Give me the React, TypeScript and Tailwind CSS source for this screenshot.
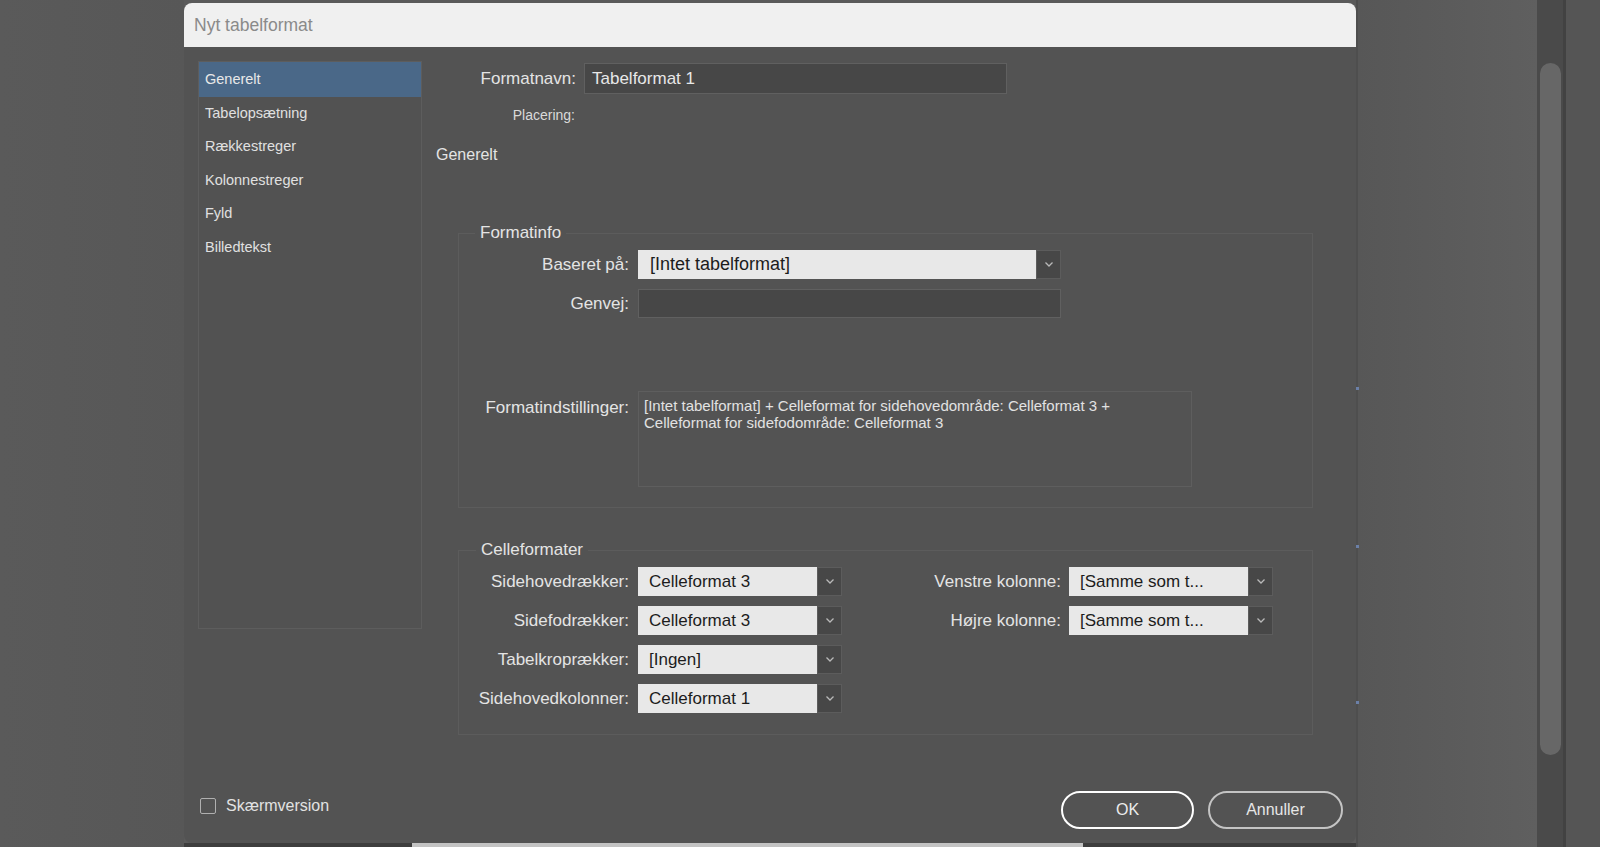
import clsx from 'clsx';

const NAV_ITEMS = ['Generelt', 'Tabelopsætning', 'Rækkestreger', 'Kolonnestreger', 'Fyld', 'Billedtekst'];

const Chevron = () => (
  <svg width="10" height="7" viewBox="0 0 10 7" fill="none">
    <path d="M1.5 1.5 L5 5 L8.5 1.5" stroke="#b9b9b9" strokeWidth="1.3" />
  </svg>
);

function Dropdown({ value, wide }: { value: string; wide?: boolean }) {
  return (
    <div className={clsx('flex h-[29px] shrink-0', wide ? 'w-[423px]' : 'w-[204px]')}>
      <div
        className={clsx(
          'flex flex-1 items-center whitespace-nowrap bg-[#e8e8e8] text-[#1c1c1c]',
          wide ? 'pl-[12px] text-[18px]' : 'pl-[11px] text-[17px]'
        )}
      >
        {value}
      </div>
      <div className="flex w-[25px] items-center justify-center border border-[#5c5c5c] bg-[#474747]">
        <Chevron />
      </div>
    </div>
  );
}

function CellRow({ label, value }: { label: string; value: string }) {
  return (
    <div className="flex h-[29px] items-center">
      <span className="w-[170px] text-right">{label}</span>
      <div className="ml-[9px]">
        <Dropdown value={value} />
      </div>
    </div>
  );
}

export default function App() {
  return (
    <div className="flex h-[847px] w-[1600px] overflow-hidden bg-[#5a5a5a] font-['Liberation_Sans',Arial,sans-serif] text-[#e4e4e4]">
      {/* background left of dialog */}
      <div className="w-[184px] shrink-0 bg-gradient-to-r from-[#5a5a5a] to-[#575757]" />

      {/* dialog column */}
      <div className="flex w-[1172px] shrink-0 flex-col pt-[3px]">
        <div className="flex h-[840px] flex-col overflow-hidden rounded-[8px] bg-[#535353]">
          {/* title bar */}
          <div className="flex h-[44px] shrink-0 items-center bg-[#f0f0f0] pl-[10px] text-[17.5px] text-[#8a8a8a]">
            Nyt tabelformat
          </div>

          <div className="flex flex-1 flex-col">
            <div className="flex">
              {/* sidebar */}
              <div className="ml-[14px] mt-[14px] h-[568px] w-[224px] shrink-0 border border-[#5d5d5d] bg-[#525252]">
                {NAV_ITEMS.map((item, i) => (
                  <div
                    key={item}
                    className={clsx(
                      'flex items-center pl-[6px] text-[14.5px]',
                      i === 0 ? 'h-[35px] bg-[#4a6888] text-[#e8e8e8]' : 'h-[33.5px] text-[#e0e0e0]'
                    )}
                  >
                    {item}
                  </div>
                ))}
              </div>

              {/* content */}
              <div className="ml-[14px] flex flex-col">
                <div className="mt-[16px] flex h-[31px] items-center">
                  <span className="w-[140px] text-right text-[17px]">Formatnavn:</span>
                  <div className="ml-[8px] flex h-[31px] w-[423px] items-center border border-[#606060] bg-[#474747] pl-[7px] text-[17px] text-[#e8e8e8]">
                    Tabelformat 1
                  </div>
                </div>

                <div className="mt-[11px] flex h-[20px] items-center">
                  <span className="w-[139px] text-right text-[14px] text-[#dadada]">Placering:</span>
                </div>

                <div className="mt-[20px] h-[20px] text-[16px] leading-[20px]">Generelt</div>

                {/* Formatinfo */}
                <fieldset className="ml-[22px] mt-[58px] w-[855px] border border-[#5c5c5c] pb-[20px] text-[17px]">
                  <legend className="ml-[16px] px-[5px] text-[17px] leading-[20px]">Formatinfo</legend>
                  <div className="mt-[7px] flex h-[29px] items-center">
                    <span className="w-[170px] text-right">Baseret på:</span>
                    <div className="ml-[9px]">
                      <Dropdown value="[Intet tabelformat]" wide />
                    </div>
                  </div>
                  <div className="mt-[10px] flex h-[29px] items-center">
                    <span className="w-[170px] text-right">Genvej:</span>
                    <div className="ml-[9px] h-[29px] w-[423px] border border-[#606060] bg-[#474747]" />
                  </div>
                  <div className="mt-[73px] flex items-start">
                    <span className="w-[170px] pt-[7px] text-right leading-[20px]">Formatindstillinger:</span>
                    <div className="ml-[9px] h-[96px] w-[554px] border border-[#5e5e5e] px-[5px] pt-[5px] text-[15px] leading-[17px] text-[#e2e2e2]">
                      [Intet tabelformat] + Celleformat for sidehovedområde: Celleformat 3 +
                      <br />
                      Celleformat for sidefodområde: Celleformat 3
                    </div>
                  </div>
                </fieldset>

                {/* Celleformater */}
                <fieldset className="ml-[22px] mt-[32px] w-[855px] border border-[#5c5c5c] pb-[21px] text-[17px]">
                  <legend className="ml-[17px] px-[5px] text-[17px] leading-[20px]">Celleformater</legend>
                  <div className="mt-[7px] flex">
                    <div className="flex flex-col gap-[10px]">
                      <CellRow label="Sidehovedrækker:" value="Celleformat 3" />
                      <CellRow label="Sidefodrækker:" value="Celleformat 3" />
                      <CellRow label="Tabelkroprækker:" value="[Ingen]" />
                      <CellRow label="Sidehovedkolonner:" value="Celleformat 1" />
                    </div>
                    <div className="flex flex-col gap-[10px]">
                      <div className="flex h-[29px] items-center">
                        <span className="w-[219px] text-right">Venstre kolonne:</span>
                        <div className="ml-[8px]">
                          <Dropdown value="[Samme som t..." />
                        </div>
                      </div>
                      <div className="flex h-[29px] items-center">
                        <span className="w-[219px] text-right">Højre kolonne:</span>
                        <div className="ml-[8px]">
                          <Dropdown value="[Samme som t..." />
                        </div>
                      </div>
                    </div>
                  </div>
                </fieldset>
              </div>
            </div>

            {/* footer */}
            <div className="mt-auto flex items-center pb-[14px] pl-[16px] pr-[13px]">
              <label className="mb-[8px] flex items-center gap-[10px] text-[16px] text-[#e2e2e2]">
                <span className="h-[16px] w-[16px] rounded-[2px] border border-[#b0b0b0]" />
                Skærmversion
              </label>
              <div className="ml-auto flex gap-[14px]">
                <button className="h-[38px] w-[133px] rounded-full border-2 border-white text-[16px] text-[#ececec]">
                  OK
                </button>
                <button className="h-[38px] w-[135px] rounded-full border-2 border-[#c4c4c4] text-[16px] text-[#e6e6e6]">
                  Annuller
                </button>
              </div>
            </div>
          </div>
        </div>
        <div className="flex h-[4px]">
          <div className="w-[228px] bg-[#3d3d3d]" />
          <div className="w-[671px] bg-[#c3c3c3]" />
          <div className="flex-1 bg-[#3d3d3d]" />
        </div>
      </div>

      {/* edge line with handles */}
      <div className="relative w-[2px] shrink-0 bg-[#4e4e4e]">
        <span className="absolute left-0 top-[387px] h-[3px] w-[3px] bg-[#6b80a8]" />
        <span className="absolute left-0 top-[545px] h-[3px] w-[3px] bg-[#6b80a8]" />
        <span className="absolute left-0 top-[701px] h-[3px] w-[3px] bg-[#6b80a8]" />
      </div>

      <div className="w-[179px] shrink-0 bg-gradient-to-r from-[#575757] to-[#5f5f5f]" />

      {/* scrollbar */}
      <div className="flex w-[26px] shrink-0 justify-center bg-[#4a4a4a] pt-[63px]">
        <div className="h-[692px] w-[21px] rounded-full bg-[#676767]" />
      </div>
      <div className="w-[3px] shrink-0 bg-[#424242]" />
      <div className="flex-1 bg-[#555555]" />
    </div>
  );
}
